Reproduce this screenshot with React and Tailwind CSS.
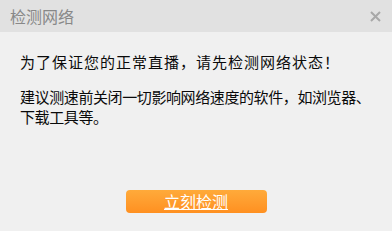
export default function App() {
  const font = { fontFamily: '"Noto Sans CJK SC", "Liberation Sans", sans-serif' };
  return (
    <div className="w-[392px] h-[231px] bg-[#f0f0f0] flex flex-col" style={font}>
      <div className="h-[32px] bg-[#e1e1e1] flex items-center justify-between pl-[10px] pr-[11px]">
        <span className="text-[16px] leading-none text-[#888888]">检测网络</span>
        <svg width="11" height="11" viewBox="0 0 11 11">
          <path d="M1 1 L10 10 M10 1 L1 10" stroke="#a8a8a8" strokeWidth="2" />
        </svg>
      </div>
      <div className="flex flex-col px-[20px] pt-[20px] text-[#0a0a0a]">
        <p className="text-[15px] leading-[20px] tracking-[1px]">为了保证您的正常直播，请先检测网络状态！</p>
        <p className="text-[15px] leading-[20px] mt-[15px] tracking-[-0.4px]">
          建议测速前关闭一切影响网络速度的软件，如浏览器、下载工具等。
        </p>
      </div>
      <div className="flex justify-center mt-auto mb-[18px]">
        <a className="w-[141px] h-[23px] rounded-[4px] bg-gradient-to-b from-[#ffaa3a] to-[#ff9020] text-white text-[16px] leading-[23px] text-center underline">
          立刻检测
        </a>
      </div>
    </div>
  );
}
